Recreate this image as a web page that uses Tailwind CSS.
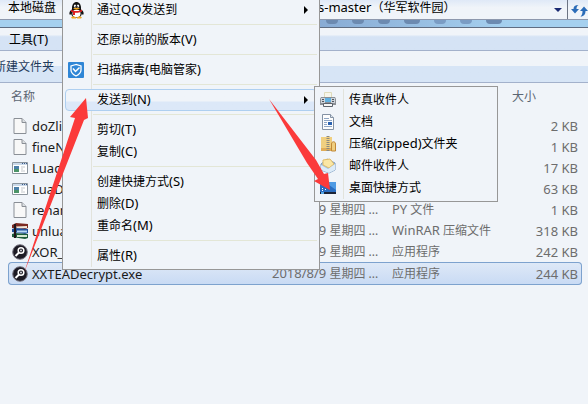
<!DOCTYPE html>
<html lang="zh-CN">
<head>
  <meta charset="UTF-8" />
  <title>XXTEADecrypt</title>
  <script src="https://cdn.jsdelivr.net/npm/@tailwindcss/browser@4"></script>
</head>
<body class="relative min-h-screen overflow-hidden bg-[#f0f4f9] font-['Noto_Sans','Noto_Sans_CJK_SC',sans-serif] text-xs text-black">

  <!-- Shared icons -->
  <svg class="hidden">
    <symbol id="page" viewBox="0 0 16 18">
      <path d="M2 1.500h8l4 4v11H2z" fill="#f8f8f8" stroke="#8a8f96" />
      <path d="M10 1.500v4h4" fill="#dcdfe2" stroke="#8a8f96" />
    </symbol>
    <symbol id="window" viewBox="0 0 16 14">
      <path d="M.5 1.500h15v11H.5z" fill="#fff" stroke="#8b949c" />
      <path d="M1 2h14v2H1z" fill="#c9d8e8" />
      <path d="M10 2h1v1h-1zM12 2h1v1h-1zM14 2h1v1h-1z" fill="#3c5c8c" />
      <path d="M2 5h5v6H2z" fill="#4a7fa8" />
      <path d="M2 8h5v3H2z" fill="#4c9468" />
      <path d="M9 6h4M9 8h2M9 10h4" stroke="#c4c8cc" />
    </symbol>
    <symbol id="magnifier" viewBox="0 0 16 16">
      <circle cx="8" cy="8" r="7.300" fill="#1c1a24" stroke="#777582" />
      <circle cx="9" cy="6.500" r="2.800" fill="#1c1a24" stroke="#fff" stroke-width="1.500" />
      <path d="M7 8.500L3.500 12" stroke="#fff" stroke-width="2" />
      <circle cx="9" cy="6.500" r="1" fill="#d8d8e0" />
    </symbol>
  </svg>

  <!-- Address bar -->
  <header class="flex h-5 items-center border-b border-[#8d98ad] bg-linear-to-b from-[#dfe9f7] to-[#f0f4f9] to-40%">
    <span class="w-[318px] shrink-0 pb-1 pl-2">本地磁盘（</span>
    <span class="flex-1 pb-1 whitespace-nowrap"><span class="text-[13px]">s-master</span>（华军软件园）</span>
    <button class="flex h-full w-5 items-center justify-center border-r border-[#6c7483]" aria-label="历史记录">
      <svg class="h-1 w-2" viewBox="0 0 8 4"><path d="M0 0h8L4 4z" fill="#1a2a72" /></svg>
    </button>
    <button class="flex h-full w-5 items-center justify-end" aria-label="刷新">
      <svg class="h-4 w-[17px]" viewBox="2 0 17 16" fill="#2b6cb8">
        <path d="M2 7l4 4.500L10 7H7.500c0-2 .5-3 2-4C6 3 4.500 4.500 4.500 7z" />
        <path d="M11 9l4-4.500L19 9h-2.500c0 3-1.500 5.500-5 5.500 1.500-1 2-3 2-5.500z" />
      </svg>
    </button>
  </header>
  <div class="h-2 border-b border-[#5f6d82] bg-[#a5d0ef]">
    <div class="ml-[319px] flex h-full w-[190px] items-start justify-around bg-linear-to-r from-[#88abd4] to-[#a5d0ef]">
      <i class="h-1 w-3 rounded-b-full bg-[#6c8ab0]"></i>
      <i class="h-1 w-3 rounded-b-full bg-[#6c8ab0]"></i>
      <i class="h-1 w-3 rounded-b-full bg-[#6c8ab0]"></i>
      <i class="h-1 w-4 rounded-b-full bg-[#6c8ab0]"></i>
      <i class="h-1 w-3 rounded-b-full bg-[#7a9cc4]"></i>
      <i class="h-1 w-3 rounded-b-full bg-[#7a9cc4]"></i>
      <i class="h-1 w-4 rounded-b-full bg-[#6c8ab0]"></i>
    </div>
  </div>

  <nav class="flex h-[23px] items-center border-b border-[#a3b1cb] bg-linear-to-b from-[#f0f4f9] from-30% to-[#d5e3f5] to-40% pt-0.5 pl-[9px]">
    <button>工具<span class="text-[13px]">(T)</span></button>
  </nav>
  <div class="flex h-8 items-center border-b border-[#a3b1cb] bg-linear-to-b from-[#f0f4f9] from-48% to-[#d7e5f6] to-50%">
    <button class="-ml-1.5 text-[#1e395b]">新建文件夹</button>
  </div>

  <!-- File list -->
  <table class="w-full table-fixed border-separate border-spacing-0 pr-1.5 pl-2 text-[#6d6d6d]">
    <colgroup>
      <col class="w-[260px]" />
      <col class="w-[120px]" />
      <col class="w-[116px]" />
      <col />
    </colgroup>
    <thead>
      <tr class="h-8 text-left text-[#5c6673]">
        <th class="pb-1 pl-[3px] font-normal">名称</th>
        <th></th>
        <th></th>
        <th class="pb-1 pl-2 font-normal">大小</th>
      </tr>
    </thead>
    <tbody>
      <tr class="h-[21px]">
        <td class="p-0"><div class="flex items-center gap-1 pl-1 text-[13px] leading-5 text-[#1a1a1a]"><svg class="h-[18px] w-4"><use href="#page" /></svg>doZlib.py</div></td>
        <td class="p-0"></td><td class="p-0"></td>
        <td class="p-0 pr-1 text-right text-[13px] leading-5">2 KB</td>
      </tr>
      <tr class="h-[21px]">
        <td class="p-0"><div class="flex items-center gap-1 pl-1 text-[13px] leading-5 text-[#1a1a1a]"><svg class="h-[18px] w-4"><use href="#page" /></svg>fineNet.py</div></td>
        <td class="p-0"></td><td class="p-0"></td>
        <td class="p-0 pr-1 text-right text-[13px] leading-5">1 KB</td>
      </tr>
      <tr class="h-[21px]">
        <td class="p-0"><div class="flex items-center gap-1 pl-1 text-[13px] leading-5 text-[#1a1a1a]"><svg class="h-3.5 w-4"><use href="#window" /></svg>Luac.exe</div></td>
        <td class="p-0"></td><td class="p-0"></td>
        <td class="p-0 pr-1 text-right text-[13px] leading-5">17 KB</td>
      </tr>
      <tr class="h-[21px]">
        <td class="p-0"><div class="flex items-center gap-1 pl-1 text-[13px] leading-5 text-[#1a1a1a]"><svg class="h-3.5 w-4"><use href="#window" /></svg>LuaDec.exe</div></td>
        <td class="p-0"></td><td class="p-0"></td>
        <td class="p-0 pr-1 text-right text-[13px] leading-5">63 KB</td>
      </tr>
      <tr class="h-[21px]">
        <td class="p-0"><div class="flex items-center gap-1 pl-1 text-[13px] leading-5 text-[#1a1a1a]"><svg class="h-[18px] w-4"><use href="#page" /></svg>rename.py</div></td>
        <td class="p-0 pl-1 leading-5 whitespace-nowrap"><span class="text-[13px]">2018/8/9</span> 星期四 ...</td>
        <td class="p-0 pl-1 leading-5 whitespace-nowrap"><span class="text-[13px]">PY</span> 文件</td>
        <td class="p-0 pr-1 text-right text-[13px] leading-5">1 KB</td>
      </tr>
      <tr class="h-[21px]">
        <td class="p-0">
          <div class="flex items-center gap-1 pl-1 text-[13px] leading-5 text-[#1a1a1a]">
            <svg class="size-4" viewBox="0 0 16 16">
              <path d="M0 2l4-2 12 1v4l-3 1L0 5z" fill="#7c2a22" /><path d="M4 3.500l11-.5v2l-10 .5z" fill="#f0e8d8" />
              <path d="M0 6l3-1 13 1v4l-3 1L0 9z" fill="#1f4f9a" /><path d="M5 7.500h10v2H5z" fill="#b8d8f4" />
              <path d="M0 11l3-1 13 1v4l-3 1-13-2z" fill="#1c5a3a" /><path d="M5 12h10v2H5z" fill="#d4e8d0" />
              <path d="M3 1v14" stroke="#20161c" stroke-width="2" />
            </svg>unluac.rar
          </div>
        </td>
        <td class="p-0 pl-1 leading-5 whitespace-nowrap"><span class="text-[13px]">2018/8/9</span> 星期四 ...</td>
        <td class="p-0 pl-1 leading-5 whitespace-nowrap"><span class="text-[13px]">WinRAR</span> 压缩文件</td>
        <td class="p-0 pr-1 text-right text-[13px] leading-5">318 KB</td>
      </tr>
      <tr class="h-[21px]">
        <td class="p-0"><div class="flex items-center gap-1 pl-1 text-[13px] leading-5 text-[#1a1a1a]"><svg class="size-4"><use href="#magnifier" /></svg>XOR_.exe</div></td>
        <td class="p-0 pl-1 leading-5 whitespace-nowrap"><span class="text-[13px]">2018/8/9</span> 星期四 ...</td>
        <td class="p-0 pl-1 leading-5">应用程序</td>
        <td class="p-0 pr-1 text-right text-[13px] leading-5">242 KB</td>
      </tr>
      <tr class="h-[22px] bg-linear-to-b from-[#dfe9f7] to-[#c8daf4]">
        <td class="rounded-l-sm border-y border-l border-[#7da2ce] p-0"><div class="flex items-center gap-1 pl-[3px] text-[13px] leading-5 text-[#1a1a1a]"><svg class="size-4"><use href="#magnifier" /></svg>XXTEADecrypt.exe</div></td>
        <td class="border-y border-[#7da2ce] p-0 pl-1 leading-5 whitespace-nowrap"><span class="text-[13px]">2018/8/9</span> 星期四 ...</td>
        <td class="border-y border-[#7da2ce] p-0 pl-1 leading-5">应用程序</td>
        <td class="rounded-r-sm border-y border-r border-[#7da2ce] p-0 pr-[3px] text-right text-[13px] leading-5">244 KB</td>
      </tr>
    </tbody>
  </table>

  <!-- Context menu -->
  <div class="absolute -top-1 left-[62px] w-[258px] border border-[#979797] bg-[#f0f4f9] p-0.5" role="menu">
    <div class="absolute inset-y-0.5 left-7 w-px bg-[#e2e3dc]"></div>
    <button class="relative flex h-[22px] w-full items-center pl-[3px]">
      <svg class="mr-3 size-[17px]" viewBox="0 0 17 17">
        <path d="M3 8c-2 2-2 4-1 5l2-2zM14 8c2 2 2 4 1 5l-2-2z" fill="#111" />
        <ellipse cx="8.500" cy="10.500" rx="5.500" ry="5.500" fill="#111" />
        <ellipse cx="8.500" cy="11.500" rx="4" ry="4" fill="#fff" />
        <path d="M4 6c0-8 9-8 9 0v2H4z" fill="#111" />
        <ellipse cx="7" cy="4" rx="1.200" ry="1.600" fill="#fff" /><ellipse cx="10" cy="4" rx="1.200" ry="1.600" fill="#fff" />
        <circle cx="7.300" cy="4.200" r=".5" /><circle cx="9.700" cy="4.200" r=".5" />
        <path d="M5 6.500c2-1 5-1 7 0-2 1.500-5 1.500-7 0z" fill="#f5a81c" />
        <path d="M3 7.500c3 2 8 2 11 0v2c-2 1-5 1.500-7 1.300V13H5v-2.700L3 9.500z" fill="#e02020" />
        <path d="M3 15.500c1-1.500 4-1.500 5 0v1H4zM9 15.500c1-1.500 4-1.500 5 0l-1 1H9z" fill="#f5a81c" />
      </svg>
      通过<span class="text-[13px]">QQ</span>发送到
      <svg class="mr-[9px] ml-auto h-2 w-1" viewBox="0 0 4 8"><path d="M0 0l4 4-4 4z" /></svg>
    </button>
    <hr class="my-[3px] ml-7 h-0.5 border-b-0 border-[#e3e6d6]" />
    <button class="flex h-[22px] w-full items-center pl-8">还原以前的版本<span class="text-[13px]">(V)</span></button>
    <hr class="my-[3px] ml-7 h-0.5 border-b-0 border-[#e3e6d6]" />
    <button class="relative flex h-[22px] w-full items-center pl-[3px]">
      <svg class="mr-[13px] size-4" viewBox="0 0 16 16">
        <rect width="16" height="16" rx="1" fill="#2f86d6" />
        <path d="M8 2.500L3 4v4c0 3 2 4.500 5 6 3-1.500 5-3 5-6V4z" fill="none" stroke="#fff" stroke-width="1.300" />
        <path d="M5 6.500L7.500 9.500 11.500 5.500" fill="none" stroke="#fff" stroke-width="1.500" />
      </svg>
      扫描病毒<span class="text-[13px]">(</span>电脑管家<span class="text-[13px]">)</span>
    </button>
    <hr class="my-[3px] ml-7 h-0.5 border-b-0 border-[#e3e6d6]" />
    <button class="relative flex h-[22px] w-full items-center rounded-sm border border-[#aecff0] bg-linear-to-b from-[#f0f4f9] from-55% to-[#dce8f8] to-60% pl-[31px]">
      发送到<span class="text-[13px]">(N)</span>
      <svg class="mr-2 ml-auto h-2 w-1" viewBox="0 0 4 8"><path d="M0 0l4 4-4 4z" /></svg>
    </button>
    <hr class="my-[3px] ml-7 h-0.5 border-b-0 border-[#e3e6d6]" />
    <button class="flex h-[22px] w-full items-center pl-8">剪切<span class="text-[13px]">(T)</span></button>
    <button class="flex h-[22px] w-full items-center pl-8">复制<span class="text-[13px]">(C)</span></button>
    <hr class="my-[3px] ml-7 h-0.5 border-b-0 border-[#e3e6d6]" />
    <button class="flex h-[22px] w-full items-center pl-8">创建快捷方式<span class="text-[13px]">(S)</span></button>
    <button class="flex h-[22px] w-full items-center pl-8">删除<span class="text-[13px]">(D)</span></button>
    <button class="flex h-[22px] w-full items-center pl-8">重命名<span class="text-[13px]">(M)</span></button>
    <hr class="my-[3px] ml-7 h-0.5 border-b-0 border-[#e3e6d6]" />
    <button class="flex h-[22px] w-full items-center pl-8">属性<span class="text-[13px]">(R)</span></button>
  </div>

  <!-- Send-to submenu -->
  <div class="absolute top-[86px] left-[314px] w-[184px] border border-[#979797] bg-[#f0f4f9] p-0.5" role="menu">
    <div class="absolute inset-y-0.5 left-7 w-px bg-[#e2e3dc]"></div>
    <button class="relative flex h-[22px] w-full items-center gap-[13px] pl-[3px]">
      <svg class="size-4" viewBox="0 0 16 16">
        <path d="M4.500.5h7v5h-7z" fill="#f6f5ea" stroke="#dedbbc" />
        <path d="M1 5h14l1 2v6H0V7z" fill="#8b9096" />
        <path d="M1 6h4v5H1zM11 6h4v5h-4z" fill="#cdd3da" /><path d="M5 6h6v4H5z" fill="#5fb0e0" />
        <path d="M2 7h2v1H2zM2 9h2v1H2zM12 7h2v1h-2zM12 9h2v1h-2z" fill="#50565e" />
        <path d="M3.500 11.500h9v3h-9z" fill="#f6f6f6" stroke="#5c636c" />
      </svg>
      传真收件人
    </button>
    <button class="relative flex h-[22px] w-full items-center gap-[13px] pl-[3px]">
      <svg class="size-4" viewBox="0 0 16 16">
        <path d="M2.500.5h8l3 3v12h-11z" fill="#fdfdfd" stroke="#8492a4" />
        <path d="M10.500.5v3h3" fill="#dbe4ee" stroke="#8492a4" />
        <path d="M4 4.500h5M4 6.500h8M4 8.500h3M4 10.500h3M4 12.500h8" stroke="#8fa6c4" />
        <path d="M8 8h4v3H8z" fill="#2a62b0" />
      </svg>
      文档
    </button>
    <button class="relative flex h-[22px] w-full items-center gap-[13px] pl-[3px]">
      <svg class="size-4" viewBox="0 0 16 16">
        <path d="M1 1h11v14H1z" fill="#f0cf80" /><path d="M1 12h11v3H1z" fill="#e0ac58" />
        <path d="M8 0v15" stroke="#8c8a80" stroke-width="3" stroke-dasharray="1 1" />
        <path d="M11.500 15V8c0-3 4-3 4 0v7z" fill="#f0cf80" stroke="#c08838" />
      </svg>
      <span>压缩<span class="text-[13px]">(zipped)</span>文件夹</span>
    </button>
    <button class="relative flex h-[22px] w-full items-center gap-[13px] pl-[3px]">
      <svg class="size-4" viewBox="0 0 16 16">
        <path d="M1 6l6-5 8 4v7l-6 3-8-3z" fill="#a4c4e4" stroke="#7c9cc0" />
        <path d="M3 2l7-1 4 5-5 4-6-3z" fill="#fbe7a4" stroke="#e0bc68" />
        <path d="M1 7l7 4 7-5v6l-6 3-8-3z" fill="#dcebf8" />
      </svg>
      邮件收件人
    </button>
    <button class="relative flex h-[22px] w-full items-center gap-[13px] pl-[3px]">
      <svg class="size-4" viewBox="0 0 16 16">
        <path d="M0 2h16v12H0z" fill="#2a6cc0" /><path d="M5 2h11v8z" fill="#4e9ae4" />
        <path d="M0 12h16v2H0z" fill="#1c2438" /><path d="M1 12h3v2H1z" fill="#58a8e8" />
        <path d="M2 8h1v1H2zM2 10h1v1H2zM5 9h1v1H5z" fill="#fff" />
      </svg>
      桌面快捷方式
    </button>
  </div>

  <!-- Pointer arrows -->
  <svg class="pointer-events-none absolute top-0 left-0 h-[404px] w-[588px]" viewBox="0 0 588 404" fill="#fb3a3a">
    <path d="M24 273L75 118l-5-1 16-19 2 20-4 2z" />
    <path d="M269 99L316 160l8 14 4-1 2 17-16-9 4-2-11-16z" />
  </svg>
</body>
</html>
